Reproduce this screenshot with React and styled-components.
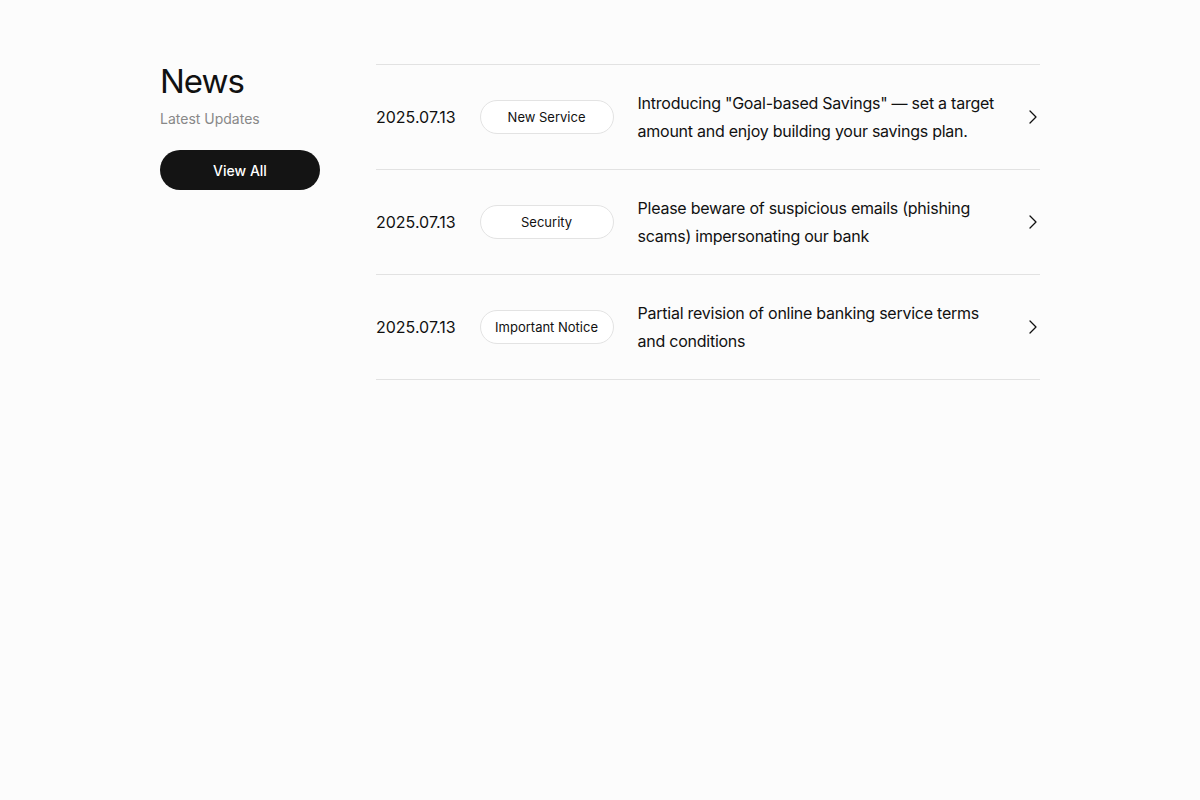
import React from 'react';
import styled, { createGlobalStyle } from 'styled-components';

const GlobalStyle = createGlobalStyle`
  body {
    margin: 0;
    background: #fcfcfc;
    font-family: Inter, "Noto Sans", sans-serif;
    color: #111;
  }
`;

const Section = styled.section`
  width: 880px;
  margin: 0 auto;
  padding-top: 64px;
  display: flex;
  gap: 56px;
  align-items: flex-start;
`;

const Aside = styled.div`
  width: 160px;
  flex-shrink: 0;
  display: flex;
  flex-direction: column;
`;

const Title = styled.h2`
  margin: 0;
  font-size: 33px;
  font-weight: 400;
  line-height: 34px;
  letter-spacing: -1px;
`;

const Subtitle = styled.p`
  margin: 11px 0 0;
  font-size: 14px;
  line-height: 20px;
  color: #888;
`;

const ViewAll = styled.button`
  margin-top: 21px;
  height: 40px;
  width: 160px;
  border: 0;
  border-radius: 20px;
  background: #141414;
  color: #fff;
  font-family: inherit;
  font-size: 14px;
  font-weight: 500;
  cursor: pointer;
`;

const List = styled.ul`
  flex: 1;
  list-style: none;
  margin: 0;
  padding: 0;
  border-top: 1px solid #e2e2e2;
`;

const Item = styled.li`
  display: flex;
  align-items: center;
  gap: 24px;
  padding: 24px 0;
  border-bottom: 1px solid #e2e2e2;
  cursor: pointer;
`;

const Date = styled.span`
  font-size: 16px;
  flex-shrink: 0;
`;

const Badge = styled.span`
  flex-shrink: 0;
  width: 134px;
  height: 34px;
  box-sizing: border-box;
  display: flex;
  align-items: center;
  justify-content: center;
  border: 1px solid #e3e3e3;
  border-radius: 17px;
  background: #fff;
  font-size: 13px;
`;

const Text = styled.p`
  flex: 1;
  margin: 0;
  font-size: 16px;
  line-height: 28px;
  letter-spacing: -0.25px;
`;

const Arrow = styled.span`
  width: 16px;
  flex-shrink: 0;
  display: flex;
  justify-content: center;
`;

const Chevron = () => (
  <svg width="10" height="14" viewBox="0 0 10 14" fill="none">
    <path d="M3 1l6 6-6 6" stroke="#111" strokeWidth="1.3" strokeLinecap="round" strokeLinejoin="round" />
  </svg>
);

const news = [
  { id: 1, date: '2025.07.13', tag: 'New Service', text: 'Introducing "Goal-based Savings" — set a target amount and enjoy building your savings plan.' },
  { id: 2, date: '2025.07.13', tag: 'Security', text: 'Please beware of suspicious emails (phishing scams) impersonating our bank' },
  { id: 3, date: '2025.07.13', tag: 'Important Notice', text: 'Partial revision of online banking service terms and conditions' },
];

const App = () => (
  <>
    <GlobalStyle />
    <Section>
      <Aside>
        <Title>News</Title>
        <Subtitle>Latest Updates</Subtitle>
        <ViewAll>View All</ViewAll>
      </Aside>
      <List>
        {news.map(({ id, date, tag, text }) => (
          <Item key={id}>
            <Date>{date}</Date>
            <Badge>{tag}</Badge>
            <Text>{text}</Text>
            <Arrow>
              <Chevron />
            </Arrow>
          </Item>
        ))}
      </List>
    </Section>
  </>
);

export default App;
